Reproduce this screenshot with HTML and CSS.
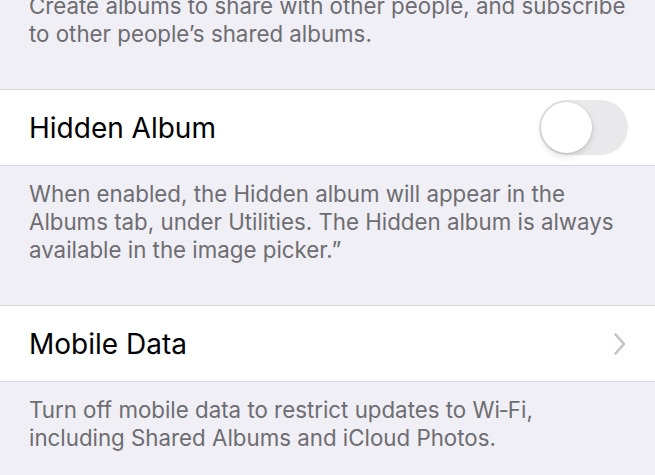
FILE: index.html
```html
<!DOCTYPE html>
<html lang="en">
<head>
<meta charset="utf-8">
<title>Photos Settings</title>
<link rel="stylesheet" href="styles.css">
</head>
<body>
<div class="page">
  <p class="footer first">Create albums to share with other people, and subscribe to other people’s shared albums.</p>
  <div class="row">
    <span class="label">Hidden Album</span>
    <span class="toggle"><span class="knob"></span></span>
  </div>
  <p class="footer">When enabled, the Hidden album will appear in the Albums tab, under Utilities. The Hidden album is always available in the image picker.”</p>
  <div class="row">
    <span class="label">Mobile Data</span>
    <svg class="chevron" width="14" height="24" viewBox="0 0 14 24"><path d="M2.5 2.5 L11 12 L2.5 21.5" fill="none" stroke="#c4c4c7" stroke-width="2.6" stroke-linecap="round" stroke-linejoin="round"/></svg>
  </div>
  <p class="footer">Turn off mobile data to restrict updates to Wi‑Fi, including Shared Albums and iCloud Photos.</p>
</div>
</body>
</html>
```
FILE: styles.css
```css
html, body {
  margin: 0;
  padding: 0;
  background: #f0eff5;
}
body {
  font-family: Inter, "Liberation Sans", Arial, sans-serif;
  width: 655px;
  height: 475px;
  overflow: hidden;
}
.page {
  display: flex;
  flex-direction: column;
}
.footer {
  margin: 0;
  padding: 14px 25px 41px 29px;
  font-size: 22.3px;
  line-height: 28px;
  color: #6d6d72;
}
.footer.first {
  margin-top: -22px;
}
.row {
  display: flex;
  align-items: center;
  justify-content: space-between;
  height: 75px;
  padding: 0 27px 0 29px;
  background: #ffffff;
  border-top: 1px solid #d6d6da;
  border-bottom: 1px solid #d6d6da;
}
.label {
  font-size: 28px;
  color: #000;
}
.toggle {
  display: flex;
  align-items: center;
  width: 89px;
  height: 55px;
  padding: 0 2px;
  box-sizing: border-box;
  border-radius: 28px;
  background: #e9e9eb;
}
.knob {
  width: 51px;
  height: 51px;
  border-radius: 50%;
  background: #fff;
  box-shadow: 0 3px 6px rgba(0,0,0,0.14), 0 0 0 1px rgba(0,0,0,0.05);
}
.chevron {
  margin-right: 1px;
}
```
